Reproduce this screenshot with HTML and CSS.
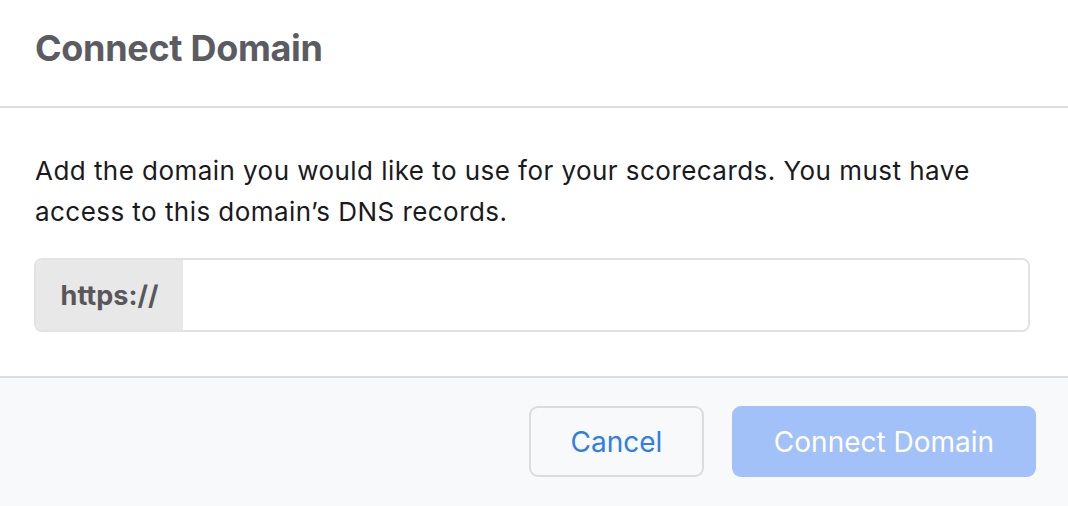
FILE: index.html
```html
<!DOCTYPE html>
<html>
<head>
<meta charset="utf-8">
<link rel="stylesheet" href="styles.css">
</head>
<body>
<div class="modal">
  <header class="modal-header">
    <h1 class="modal-title">Connect Domain</h1>
  </header>
  <section class="modal-body">
    <p class="desc">Add the domain you would like to use for your scorecards. You must have access to this domain’s DNS records.</p>
    <div class="url-field">
      <span class="url-prefix">https://</span>
      <input class="url-input" type="text">
    </div>
  </section>
  <footer class="modal-footer">
    <button class="btn btn-cancel">Cancel</button>
    <button class="btn btn-primary">Connect Domain</button>
  </footer>
</div>
</body>
</html>
```
FILE: styles.css
```css
html, body {
  margin: 0;
  padding: 0;
  background: #ffffff;
}
body {
  font-family: Inter, "Noto Sans", sans-serif;
  width: 1068px;
  height: 506px;
  overflow: hidden;
}
.modal {
  display: flex;
  flex-direction: column;
  height: 506px;
}
.modal-header {
  height: 106px;
  border-bottom: 2px solid #dedede;
  box-sizing: content-box;
  display: flex;
  align-items: flex-start;
  padding: 0 35px;
}
.modal-title {
  margin: 0;
  padding-top: 26px;
  font-size: 36px;
  line-height: 44px;
  font-weight: 700;
  color: #5b5b62;
  letter-spacing: -0.3px;
}
.modal-body {
  padding: 0 38px 0 34px;
  height: 270px;
  box-sizing: border-box;
  border-bottom: 2px solid #dedede;
}
.desc {
  margin: 0;
  padding: 42px 0 0 1px;
  font-size: 26px;
  line-height: 41px;
  letter-spacing: 0.45px;
  color: #1a1a1e;
}
.url-field {
  margin-top: 26px;
  display: flex;
  height: 74px;
  border: 2px solid #e2e2e2;
  border-radius: 8px;
  box-sizing: border-box;
  overflow: hidden;
}
.url-prefix {
  width: 147px;
  flex: none;
  background: #e8e8e8;
  display: flex;
  align-items: center;
  justify-content: center;
  font-size: 27px;
  font-weight: 700;
  color: #58585a;
}
.url-input {
  flex: 1;
  border: none;
  outline: none;
  background: #fff;
  font: inherit;
  font-size: 24px;
}
.modal-footer {
  flex: 1;
  background: #f8f9fa;
  display: flex;
  justify-content: flex-end;
  align-items: flex-start;
  gap: 28px;
  padding: 28px 32px 0 0;
}
.btn {
  height: 71px;
  border-radius: 9px;
  font-family: inherit;
  font-size: 28px;
  box-sizing: border-box;
  cursor: pointer;
}
.btn-cancel {
  width: 175px;
  background: #f8f9fa;
  border: 2px solid #dcdcdc;
  color: #2f7de9;
}
.btn-primary {
  width: 304px;
  background: #a2c1f8;
  border: none;
  color: #ffffff;
}
```
